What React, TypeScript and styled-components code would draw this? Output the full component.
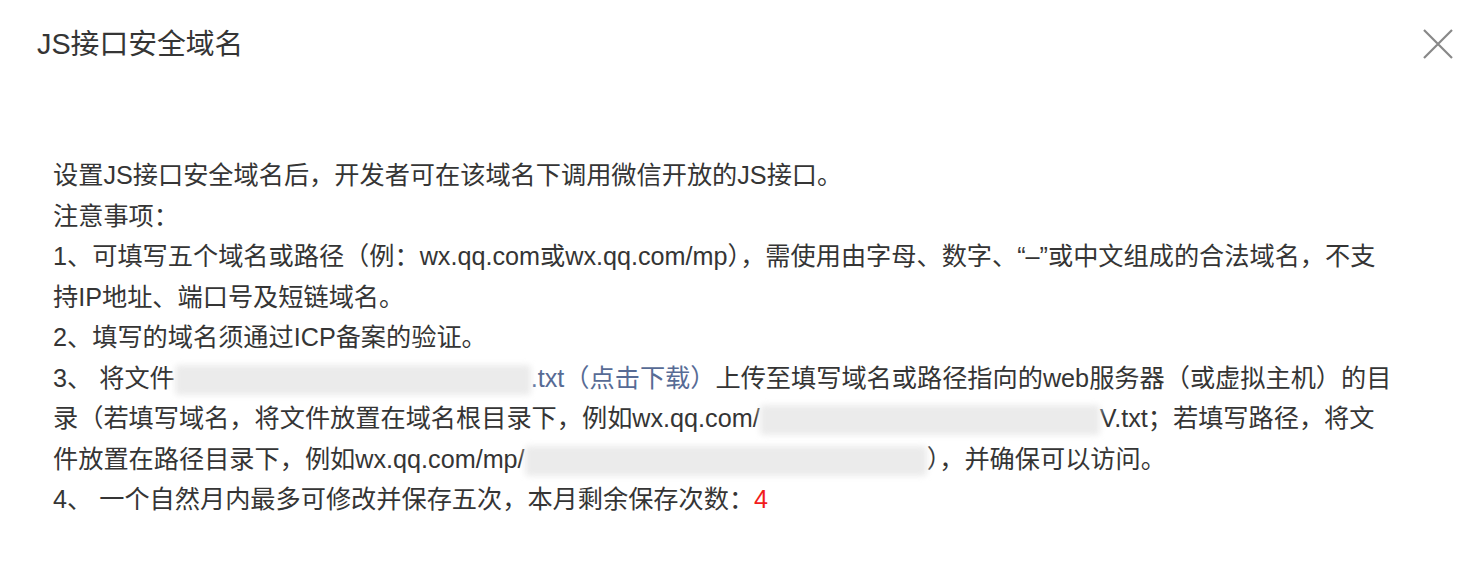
import styled, { createGlobalStyle } from "styled-components";

const GlobalStyle = createGlobalStyle`
  html, body {
    margin: 0;
    padding: 0;
    background: #fff;
  }
  body {
    font-family: "Liberation Sans", "Noto Sans CJK SC", sans-serif;
    color: #353535;
  }
`;

const Dialog = styled.div`
  width: 1478px;
  height: 574px;
  background: #fff;
  box-sizing: border-box;
`;

const Header = styled.div`
  display: flex;
  align-items: center;
  justify-content: space-between;
  padding: 24px 20px 0 37px;
`;

const Title = styled.h3`
  margin: 0;
  font-size: 28.8px;
  line-height: 38px;
  font-weight: 400;
  color: #353535;
`;

const CloseButton = styled.button`
  display: flex;
  align-items: center;
  justify-content: center;
  width: 40px;
  height: 40px;
  padding: 0;
  border: none;
  background: transparent;
  cursor: pointer;
`;

const Body = styled.div`
  margin-top: 91px;
  width: 1340px;
  padding-left: 53px;
  font-size: 25.2px;
  line-height: 40.5px;
`;

const Para = styled.p`
  margin: 0;
`;

const Link = styled.a`
  color: #576b95;
  text-decoration: none;
  cursor: pointer;
`;

const Count = styled.span`
  color: #f21c1c;
`;

const Blurred = styled.span<{ $w: number }>`
  display: inline-block;
  width: ${(p) => p.$w}px;
  height: 30px;
  vertical-align: middle;
  background: #ebebeb;
  border-radius: 4px;
  filter: blur(3px);
`;

const CloseIcon = () => (
  <svg width="30" height="30" viewBox="0 0 30 30" fill="none">
    <path d="M1 1L29 29M29 1L1 29" stroke="#888" strokeWidth="2.2" />
  </svg>
);

export default function App() {
  return (
    <>
      <GlobalStyle />
      <Dialog>
        <Header>
          <Title>JS接口安全域名</Title>
          <CloseButton aria-label="关闭">
            <CloseIcon />
          </CloseButton>
        </Header>
        <Body>
          <Para>设置JS接口安全域名后，开发者可在该域名下调用微信开放的JS接口。</Para>
          <Para>注意事项：</Para>
          <Para>
            1、可填写五个域名或路径（例：wx.qq.com或wx.qq.com/mp），需使用由字母、数字、“–”或中文组成的合法域名，不支持IP地址、端口号及短链域名。
          </Para>
          <Para>2、填写的域名须通过ICP备案的验证。</Para>
          <Para>
            3、 将文件<Blurred $w={356} />
            <Link>.txt（点击下载）</Link>上传至填写域名或路径指向的web服务器（或虚拟主机）的目录（若填写域名，将文件放置在域名根目录下，例如wx.qq.com/
            <Blurred $w={340} />
            V.txt；若填写路径，将文件放置在路径目录下，例如wx.qq.com/mp/
            <Blurred $w={402} />
            ），并确保可以访问。
          </Para>
          <Para>
            4、 一个自然月内最多可修改并保存五次，本月剩余保存次数：<Count>4</Count>
          </Para>
        </Body>
      </Dialog>
    </>
  );
}
